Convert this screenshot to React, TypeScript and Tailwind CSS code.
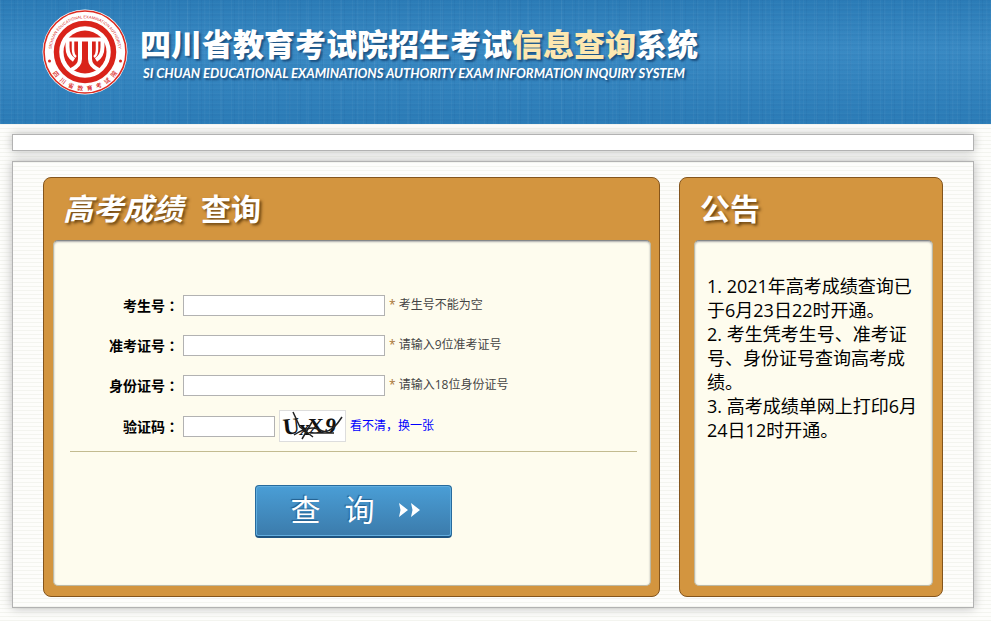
import type { ReactNode } from "react";

const texture =
  "bg-[repeating-linear-gradient(0deg,#f3f4ef_0px,#f3f4ef_1px,#fdfdfb_1px,#fdfdfb_4px)]";

const cjk = "font-['Open_Sans','Noto_Sans_CJK_SC',sans-serif]";

const labelStyle =
  "w-[113px] shrink-0 text-right text-sm leading-4 font-bold";

function Seal() {
  return (
    <svg viewBox="0 0 86 86" className="size-[86px] shrink-0" role="img" aria-label="四川省教育考试院">
      <defs>
        <path id="seal-top" d="M9.8 48 A33.6 33.6 0 1 1 76.2 48" />
        <path id="seal-bottom" d="M5.2 50 A38.4 38.4 0 0 0 80.8 50" />
      </defs>
      <circle cx="43" cy="43" r="42.5" fill="#fff" />
      <circle cx="43" cy="43" r="41" fill="none" stroke="#dc2b20" strokeWidth="1.6" />
      <circle cx="43" cy="43" r="28.5" fill="none" stroke="#d9231a" strokeWidth="5.500" />
      <circle cx="43" cy="43" r="21.5" fill="#d9231a" />
      <rect x="22" y="28.500" width="42" height="4" fill="#fff" />
      <g fill="none" stroke="#fff">
        <path strokeWidth="4" d="M25.500 31 V38 Q25.500 47 32 51 M60.500 31 V38 Q60.500 47 54 51" />
        <path strokeWidth="2.500" d="M31 32 V40 Q31 46 34 48 M55 32 V40 Q55 46 52 48" />
        <path strokeWidth="4" d="M38 32 V50 Q38 57 29 61 M48 32 V50 Q48 57 57 61" />
      </g>
      <circle cx="7.500" cy="52" r="1.500" fill="#d9231a" />
      <circle cx="78.500" cy="52" r="1.500" fill="#d9231a" />
      <text className="font-['Liberation_Sans',sans-serif] text-[4px]" fill="#d9231a">
        <textPath href="#seal-top" startOffset="50%" textAnchor="middle">
          SICHUAN EDUCATIONAL EXAMINATION AUTHORITY
        </textPath>
      </text>
      <text className="font-['Noto_Sans_CJK_SC',sans-serif] text-[6px] font-medium" fill="#d9231a">
        <textPath href="#seal-bottom" startOffset="50%" textAnchor="middle">
          四&#160;&#160;&#160;川&#160;&#160;&#160;省&#160;&#160;&#160;教&#160;&#160;&#160;育&#160;&#160;&#160;考&#160;&#160;&#160;试&#160;&#160;&#160;院
        </textPath>
      </text>
    </svg>
  );
}

function Captcha() {
  return (
    <svg viewBox="0 0 65 30" className="h-8 w-[67px] border border-[#ddd] bg-white" role="img" aria-label="验证码图片">
      <g className="font-['Liberation_Serif',serif] font-bold" fill="#111">
        <text x="3" y="23" fontSize="23" transform="rotate(-6 10 16)">U</text>
        <text x="19" y="24" fontSize="22">x</text>
        <text x="28" y="22" fontSize="22">X</text>
        <text x="45" y="22" fontSize="22" transform="rotate(10 50 16)">9</text>
      </g>
      <g fill="none" stroke="#222" strokeWidth="1.500">
        <path d="M13 1 L20 16 L33 26" />
        <path d="M14 24 Q30 13 40 19 T62 6" />
        <path d="M22 28 L32 11 M30 22 L54 22" />
      </g>
    </svg>
  );
}

function Panel({ title, className, children }: { title: ReactNode; className: string; children: ReactNode }) {
  return (
    <section
      className={`flex min-h-[420px] flex-col rounded-lg border border-[#84551d] bg-[#d3953f] pb-[10px] ${className}`}
    >
      <h2 className="h-[62px] text-[30px] leading-[62px] font-bold text-white [text-shadow:2px_2px_3px_rgba(70,40,0,.75)]">
        {title}
      </h2>
      <div className="flex-1 rounded-[5px] border border-[#bcb9a5] border-t-[#85888a] bg-[#fefcee] shadow-[inset_0_1px_2px_#aaa]">
        {children}
      </div>
    </section>
  );
}

function Field({ id, label, hint }: { id: string; label: string; hint: string }) {
  return (
    <div className="flex h-10 items-center">
      <label htmlFor={id} className={labelStyle}>
        {label}
        <span className="mr-1 font-['Noto_Sans_CJK_TC',sans-serif]" lang="zh-Hant">：</span>
      </label>
      <input id={id} type="text" className="h-[21px] w-[202px] border border-[#b2b2b2] bg-white px-1 text-xs" />
      <span className="ml-1 text-xs text-[#444]">
        <span className="text-[#a87332]">*</span> {hint}
      </span>
    </div>
  );
}

export default function App() {
  return (
    <div className={`min-h-screen pb-3 text-black ${cjk} ${texture}`}>
      <header className="h-[124px] bg-[#2b7cb7] bg-[repeating-linear-gradient(90deg,rgba(255,255,255,.03)_0px,rgba(255,255,255,.03)_1px,transparent_1px,transparent_3px,rgba(0,30,90,.04)_3px,rgba(0,30,90,.04)_4px,transparent_4px,transparent_11px),repeating-linear-gradient(90deg,rgba(255,255,255,.04)_0px,transparent_2px,transparent_17px),repeating-linear-gradient(0deg,rgba(255,255,255,.02)_0px,rgba(255,255,255,.02)_1px,transparent_1px,transparent_3px,rgba(0,30,90,.03)_3px,rgba(0,30,90,.03)_5px),linear-gradient(180deg,transparent_0%,rgba(90,170,225,.3)_40%,transparent_100%)]">
        <div className="flex gap-3 pt-[9px] pl-[42px]">
          <Seal />
          <div className="pt-[14px] whitespace-nowrap text-white [text-shadow:2px_2px_2px_rgba(0,30,70,.5)]">
            <h1 className="text-[31px] leading-[42px] font-black">
              四川省教育考试院招生考试<span className="text-[#fce7b0]">信息查询</span>系统
            </h1>
            <p className="pl-[3px] font-['Lato',sans-serif] text-[13px] leading-4 font-bold italic">
              SI CHUAN EDUCATIONAL EXAMINATIONS AUTHORITY EXAM INFORMATION INQUIRY SYSTEM
            </p>
          </div>
        </div>
      </header>

      <div className="mt-[10px] mr-[17px] ml-3 h-[17px] border border-[#b2b2b2] bg-white shadow-[0_0_10px_#bbb]" />

      <main
        className={`mt-[10px] mr-[17px] ml-3 flex gap-[19px] border border-[#b2b2b2] px-[30px] pt-[15px] pb-[10px] shadow-[0_0_10px_#bbb] ${texture}`}
      >
        <Panel
          className="min-w-0 flex-1 pr-2 pl-[9px]"
          title={
            <span className="pl-[10px]">
              <span className="mr-[18px] italic">高考成绩</span>查询
            </span>
          }
        >
          <form className="pt-[44px] pr-[13px] pl-4" onSubmit={(e) => e.preventDefault()}>
            <Field id="candidate" label="考生号" hint="考生号不能为空" />
            <Field id="ticket" label="准考证号" hint="请输入9位准考证号" />
            <Field id="identity" label="身份证号" hint="请输入18位身份证号" />
            <div className="flex h-[42px] items-center">
              <label htmlFor="code" className={labelStyle}>
                验证码
                <span className="mr-1 font-['Noto_Sans_CJK_TC',sans-serif]" lang="zh-Hant">：</span>
              </label>
              <input id="code" type="text" className="mr-1 h-[21px] w-[92px] border border-[#b2b2b2] bg-white px-1 text-xs" />
              <Captcha />
              <a href="#code" className="ml-1 text-xs text-[#0000ff]">
                看不清，换一张
              </a>
            </div>
            <hr className="mt-1 border-t border-[#c3bb90]" />
            <button
              type="submit"
              className="mx-auto mt-[33px] flex h-[53px] w-[197px] items-center justify-center gap-6 rounded-[4px] border border-[#276b9d] border-b-2 border-b-[#1d5380] bg-linear-to-b from-[#4a9ed6] to-[#3b7bab] pb-0.5 pl-1 text-[30px] leading-none text-white shadow-[inset_0_0_0_1px_#63aede] [text-shadow:-1px_-1px_1px_#235f8e]"
            >
              <span>查</span>
              <span>询</span>
              <svg viewBox="0 0 22 14" className="h-[14px] w-[22px]" fill="#fff" aria-hidden="true">
                <path d="M0 0 L9 7 L0 14 L1.500 7 Z M12 0 L21 7 L12 14 L13.500 7 Z" />
              </svg>
            </button>
          </form>
        </Panel>

        <Panel className="w-[264px] shrink-0 pr-[9px] pl-[14px]" title={<span className="pl-[6px]">公告</span>}>
          <div className="px-3 pt-[33px] text-lg leading-6">
            <p>1. 2021年高考成绩查询已于6月23日22时开通。</p>
            <p>2. 考生凭考生号、准考证号、身份证号查询高考成绩。</p>
            <p>3. 高考成绩单网上打印6月24日12时开通。</p>
          </div>
        </Panel>
      </main>
    </div>
  );
}
